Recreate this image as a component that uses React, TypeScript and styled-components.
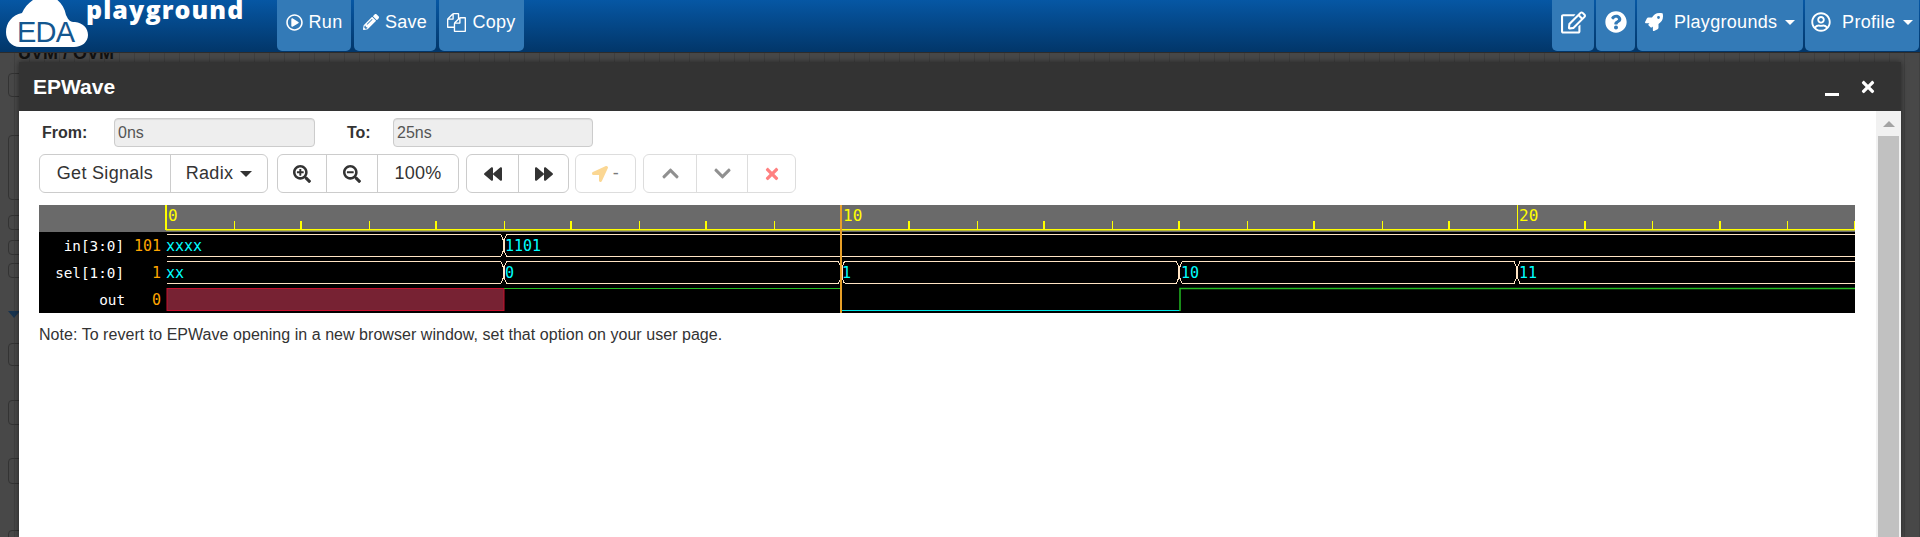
import React from "react";
import styled, { createGlobalStyle } from "styled-components";
import {
	FaBackward,
	FaChevronDown,
	FaChevronUp,
	FaForward,
	FaLocationArrow,
	FaPencilAlt,
	FaQuestionCircle,
	FaRegEdit,
	FaRegPlayCircle,
	FaRegUserCircle,
	FaRocket,
	FaSearchMinus,
	FaSearchPlus,
	FaTimes,
} from "react-icons/fa";

const GlobalStyle = createGlobalStyle`
	html, body {
		margin: 0;
		padding: 0;
		height: 100%;
		overflow: hidden;
		background: #454545;
		font-family: "Liberation Sans", Arial, sans-serif;
		font-size: 16px;
		color: #333;
	}
	* {
		box-sizing: border-box;
	}
`;

const Page = styled.div`
	position: relative;
	width: 1920px;
	height: 537px;
	overflow: hidden;
`;

const Header = styled.header`
	position: relative;
	z-index: 3;
	display: flex;
	height: 52px;
	padding: 0 1px 1px 0;
	background: linear-gradient(#0657a4, #023669);
	box-shadow: 0 1px 0 #2c2c2c;
`;

const Logo = styled.div`
	position: relative;
	width: 277px;
	flex: none;
`;

const CloudSvg = styled.svg`
	position: absolute;
	left: 6px;
	top: 0;
`;

const EdaText = styled.span`
	position: absolute;
	left: 17px;
	top: 19px;
	font-size: 29px;
	line-height: 26px;
	letter-spacing: -0.8px;
	color: #14578f;
`;

const PlaygroundText = styled.span`
	position: absolute;
	left: 86px;
	top: -3px;
	font-family: "Open Sans", sans-serif;
	font-weight: 800;
	font-size: 25px;
	line-height: 24px;
	color: #fff;
	letter-spacing: 1.1px;
`;

const NavGroup = styled.nav<{ $gap: number }>`
	display: flex;
	gap: ${(p) => p.$gap}px;
`;

const NavSpacer = styled.div`
	flex: 1;
`;

const NavButton = styled.div<{ $w: number }>`
	display: flex;
	align-items: center;
	justify-content: center;
	gap: 6px;
	width: ${(p) => p.$w}px;
	height: 51px;
	padding-bottom: 7px;
	background: #337ab7;
	border-radius: 0 0 5px 5px;
	color: #fff;
	font-size: 18px;
	letter-spacing: 0.3px;
	white-space: nowrap;

	svg {
		flex: none;
	}
`;

const Caret = styled.i<{ $color?: string; $size?: number }>`
	display: inline-block;
	width: 0;
	height: 0;
	margin-left: 2px;
	border-top: ${(p) => p.$size || 5}px solid ${(p) => p.$color || "#fff"};
	border-left: ${(p) => p.$size || 5}px solid transparent;
	border-right: ${(p) => p.$size || 5}px solid transparent;
`;

const Behind = styled.div`
	display: flex;
	flex-direction: column;
	height: 485px;
	padding-left: 8px;
	background: repeating-linear-gradient(
		90deg,
		#484848 0,
		#484848 14px,
		#404040 14px,
		#404040 15px
	);
`;

const BehindTitle = styled.div`
	flex: none;
	height: 12px;
	padding-left: 10px;
	font-weight: bold;
	font-size: 18px;
	line-height: 12px;
	color: #111;
	margin-top: -5px;
`;

const BehindBox = styled.div<{ $h: number; $mt: number }>`
	flex: none;
	width: 24px;
	height: ${(p) => p.$h}px;
	margin-top: ${(p) => p.$mt}px;
	border: 1px solid #333;
	border-radius: 4px;
`;

const BehindArrow = styled.div`
	flex: none;
	width: 0;
	margin-top: 33px;
	border-top: 7px solid #17334f;
	border-left: 6px solid transparent;
	border-right: 6px solid transparent;
`;

const Modal = styled.section`
	position: absolute;
	z-index: 2;
	left: 19px;
	top: 62px;
	width: 1882px;
	height: 475px;
	display: flex;
	flex-direction: column;
	background: #fff;
	box-shadow: 0 0 6px rgba(0, 0, 0, 0.5);
`;

const TitleBar = styled.div`
	flex: none;
	display: flex;
	align-items: center;
	height: 49px;
	padding: 0 24px 0 14px;
	background: #333;
	color: #fff;
`;

const Title = styled.h4`
	flex: 1;
	margin: 0;
	font-size: 21px;
	font-weight: bold;
`;

const MinimizeBar = styled.i`
	display: block;
	width: 14px;
	height: 3px;
	margin: 16px 20px 0 0;
	background: #fff;
`;

const CloseMark = styled(FaTimes)`
	display: block;
	width: 18px;
	height: 18px;
`;

const ModalMain = styled.div`
	flex: 1;
	display: flex;
	min-height: 0;
`;

const Content = styled.div`
	flex: 1;
	padding: 7px 21px 0 20px;
	min-width: 0;
`;

const ScrollTrack = styled.div`
	flex: none;
	display: flex;
	flex-direction: column;
	align-items: center;
	width: 25px;
	background: #f1f1f1;
`;

const ScrollArrow = styled.i`
	display: block;
	width: 0;
	margin: 10px 0 9px;
	border-bottom: 6px solid #a3a3a3;
	border-left: 6px solid transparent;
	border-right: 6px solid transparent;
`;

const ScrollThumb = styled.div`
	flex: 1;
	width: 21px;
	background: #c1c1c1;
`;

const RangeRow = styled.div`
	display: flex;
	align-items: center;
	height: 29px;
	padding-left: 3px;
`;

const RangeLabel = styled.label<{ $w: number }>`
	width: ${(p) => p.$w}px;
	font-weight: bold;
	font-size: 16px;
`;

const RangeInput = styled.input<{ $w: number; $mr?: number }>`
	width: ${(p) => p.$w}px;
	height: 29px;
	margin-right: ${(p) => p.$mr || 0}px;
	padding: 0 3px;
	border: 1px solid #ccc;
	border-radius: 4px;
	background: #eee;
	box-shadow: inset 0 1px 1px rgba(0, 0, 0, 0.075);
	color: #555;
	font-family: inherit;
	font-size: 16px;
`;

const ToolRow = styled.div`
	display: flex;
	margin-top: 7px;
`;

const BtnGroup = styled.div<{ $ml?: number; $faded?: boolean }>`
	display: flex;
	height: 39px;
	margin-left: ${(p) => p.$ml || 0}px;
	border: 1px solid #ccc;
	border-radius: 6px;
	background: #fff;
	opacity: ${(p) => (p.$faded ? 0.65 : 1)};
`;

const Btn = styled.div<{ $w: number }>`
	display: flex;
	align-items: center;
	justify-content: center;
	gap: 5px;
	width: ${(p) => p.$w}px;
	font-size: 18px;
	letter-spacing: 0.3px;
	color: #333;
	white-space: nowrap;

	& + & {
		border-left: 1px solid #ccc;
	}
`;

const Wave = styled.svg`
	display: block;
	margin-top: 12px;
`;

const Note = styled.p`
	margin: 12px 0 0;
	font-size: 16px;
	line-height: 20px;
	letter-spacing: 0.04px;
`;

const T0 = 166;
const NS = 67.55;
const RIGHT = 1855;
const MONO = '"DejaVu Sans Mono", "Liberation Mono", monospace';

const xAt = (ns: number) => T0 + ns * NS;

const isThick = (ns: number) => {
	const decade = Math.floor(ns / 10);
	return decade === 0 ? ns % 2 === 0 : ns % 2 === 1;
};

// font awesome 4 files-o, the current package only has the newer shape
const FilesIcon = () => (
	<svg width={19} height={19} viewBox="0 0 1792 1792" fill="currentColor">
		<path d="M1696 384q40 0 68 28t28 68v1216q0 40-28 68t-68 28h-960q-40 0-68-28t-28-68v-288h-544q-40 0-68-28t-28-68v-672q0-40 20-88t48-76l408-408q28-28 76-48t88-20h416q40 0 68 28t28 68v328q68-40 128-40h416zm-544 213l-299 299h299v-299zm-640-384l-299 299h299v-299zm196 647l316-316v-416h-384v416q0 40-28 68t-68 28h-416v640h512v-256q0-40 20-88t48-76zm956 804v-1152h-384v416q0 40-28 68t-68 28h-416v640h896z" />
	</svg>
);

function Bus({ top, bot, edges }: { top: number; bot: number; edges: number[] }) {
	const stops = [167, ...edges.map(xAt), RIGHT + 4];
	const parts: string[] = [];
	for (let i = 0; i < stops.length - 1; i++) {
		const a = i === 0 ? stops[0] : stops[i] + 3;
		const b = stops[i + 1] - 3;
		parts.push(`M${a} ${top + 0.5}H${b}L${b + 2.5} ${top + 6}V${bot - 5}L${b} ${bot + 0.5}H${a}`);
		if (i > 0) {
			parts.push(`M${a} ${top + 0.5}L${a - 2.5} ${top + 6}V${bot - 5}L${a} ${bot + 0.5}`);
		}
	}
	return <path d={parts.join("")} fill="none" stroke="#ffe4c4" strokeWidth={1} shapeRendering="crispEdges" />;
}

const Ruler = () => {
	const ticks = [];
	for (let ns = 1; ns <= 25; ns++) {
		if (ns % 10 === 0) continue;
		ticks.push(
			<rect
				key={ns}
				x={Math.round(xAt(ns)) - (isThick(ns) ? 1 : 0)}
				y={221}
				width={isThick(ns) ? 2 : 1}
				height={8}
				fill="#ffff00"
			/>
		);
	}
	return <g>{ticks}</g>;
};

const waveStyle = { fontFamily: MONO };

const Waveform = () => (
	<Wave width={1816} height={108} viewBox="39 205 1816 108" style={waveStyle}>
		<rect x={39} y={205} width={1816} height={108} fill="#000" />
		<rect x={39} y={205} width={1816} height={27} fill="#6a6a6a" />
		<rect x={166} y={229} width={1689} height={1.5} fill="#ffff00" />
		<Ruler />
		<rect x={165} y={205} width={2} height={25} fill="#ffff00" />
		<rect x={1517} y={205} width={1} height={25} fill="#ffff00" />

		<g fill="#ffff00" fontSize={16}>
			<text x={168} y={221}>0</text>
			<text x={843} y={221}>10</text>
			<text x={1519} y={221}>20</text>
		</g>

		<g fill="#fff" fontSize={14.3} textAnchor="end">
			<text x={124} y={251}>in[3:0]</text>
			<text x={124} y={278}>sel[1:0]</text>
			<text x={125} y={305}>out</text>
		</g>
		<g fill="#ffa500" fontSize={15} textAnchor="end">
			<text x={161} y={251}>101</text>
			<text x={161} y={278}>1</text>
			<text x={161} y={305}>0</text>
		</g>

		<Bus top={234} bot={256} edges={[5]} />
		<Bus top={261} bot={283} edges={[5, 10, 15, 20]} />

		<rect x={167} y={288.5} width={337} height={22} fill="#772233" stroke="#c8102e" />
		<path d="M504 288.5H841" stroke="#22bb22" fill="none" />
		<path d="M841 310.5H1180" stroke="#00e5e5" fill="none" />
		<path d="M1180 311V288.5H1855" stroke="#22bb22" strokeWidth={1.5} fill="none" />

		<g fill="#00ffff" fontSize={15}>
			<text x={166} y={251}>xxxx</text>
			<text x={505} y={251}>1101</text>
			<text x={166} y={278}>xx</text>
			<text x={505} y={278}>0</text>
			<text x={842} y={278}>1</text>
			<text x={1181} y={278}>10</text>
			<text x={1519} y={278}>11</text>
		</g>

		<rect x={840} y={205} width={2} height={108} fill="#e8a028" />
	</Wave>
);

export default function App() {
	return (
		<Page>
			<GlobalStyle />
			<Header>
				<Logo>
					<CloudSvg width={84} height={48} viewBox="0 0 84 48">
						<path
							d="M14 47C5 47 0 40 0 32C0 23 6 15 16 13C20 4 29 -4 40 -4C50 -4 58 4 60 15C63 21 64 22 69 22C77 23 82 28 82 35C82 42 76 47 68 47Z"
							fill="#fff"
						/>
					</CloudSvg>
					<EdaText>EDA</EdaText>
					<PlaygroundText>playground</PlaygroundText>
				</Logo>
				<NavGroup $gap={3}>
					<NavButton $w={74}>
						<FaRegPlayCircle size={17} />
						Run
					</NavButton>
					<NavButton $w={82}>
						<FaPencilAlt size={16} />
						Save
					</NavButton>
					<NavButton $w={85}>
						<FilesIcon />
						Copy
					</NavButton>
				</NavGroup>
				<NavSpacer />
				<NavGroup $gap={2}>
					<NavButton $w={42}>
						<FaRegEdit size={25} />
					</NavButton>
					<NavButton $w={39}>
						<FaQuestionCircle size={22} />
					</NavButton>
					<NavButton $w={166}>
						<FaRocket size={18} />
						<span>&nbsp;Playgrounds</span>
						<Caret />
					</NavButton>
					<NavButton $w={114}>
						<FaRegUserCircle size={20} />
						<span>&nbsp;Profile</span>
						<Caret />
					</NavButton>
				</NavGroup>
			</Header>

			<Behind>
				<BehindTitle>UVM / OVM</BehindTitle>
				<BehindBox $h={24} $mt={14} />
				<BehindBox $h={65} $mt={38} />
				<BehindBox $h={15} $mt={15} />
				<BehindBox $h={15} $mt={10} />
				<BehindBox $h={15} $mt={8} />
				<BehindArrow />
				<BehindBox $h={23} $mt={25} />
				<BehindBox $h={25} $mt={34} />
				<BehindBox $h={26} $mt={33} />
				<BehindBox $h={26} $mt={46} />
			</Behind>

			<Modal>
				<TitleBar>
					<Title>EPWave</Title>
					<MinimizeBar />
					<CloseMark />
				</TitleBar>
				<ModalMain>
					<Content>
						<RangeRow>
							<RangeLabel $w={72}>From:</RangeLabel>
							<RangeInput $w={201} $mr={32} value="0ns" disabled readOnly />
							<RangeLabel $w={46}>To:</RangeLabel>
							<RangeInput $w={200} value="25ns" disabled readOnly />
						</RangeRow>
						<ToolRow>
							<BtnGroup>
								<Btn $w={130}>Get Signals</Btn>
								<Btn $w={97}>
									Radix
									<Caret $color="#333" $size={6} />
								</Btn>
							</BtnGroup>
							<BtnGroup $ml={9}>
								<Btn $w={48}>
									<FaSearchPlus size={18} />
								</Btn>
								<Btn $w={51}>
									<FaSearchMinus size={18} />
								</Btn>
								<Btn $w={81}>100%</Btn>
							</BtnGroup>
							<BtnGroup $ml={7}>
								<Btn $w={51}>
									<FaBackward size={18} />
								</Btn>
								<Btn $w={50}>
									<FaForward size={18} />
								</Btn>
							</BtnGroup>
							<BtnGroup $ml={6} $faded>
								<Btn $w={59}>
									<FaLocationArrow size={16} color="#f9c25a" />
									<span>-</span>
								</Btn>
							</BtnGroup>
							<BtnGroup $ml={7} $faded>
								<Btn $w={52}>
									<FaChevronUp size={19} color="#555" />
								</Btn>
								<Btn $w={51}>
									<FaChevronDown size={19} color="#555" />
								</Btn>
								<Btn $w={48}>
									<FaTimes size={18} color="#ff3d3d" />
								</Btn>
							</BtnGroup>
						</ToolRow>
						<Waveform />
						<Note>Note: To revert to EPWave opening in a new browser window, set that option on your user page.</Note>
					</Content>
					<ScrollTrack>
						<ScrollArrow />
						<ScrollThumb />
					</ScrollTrack>
				</ModalMain>
			</Modal>
		</Page>
	);
}
